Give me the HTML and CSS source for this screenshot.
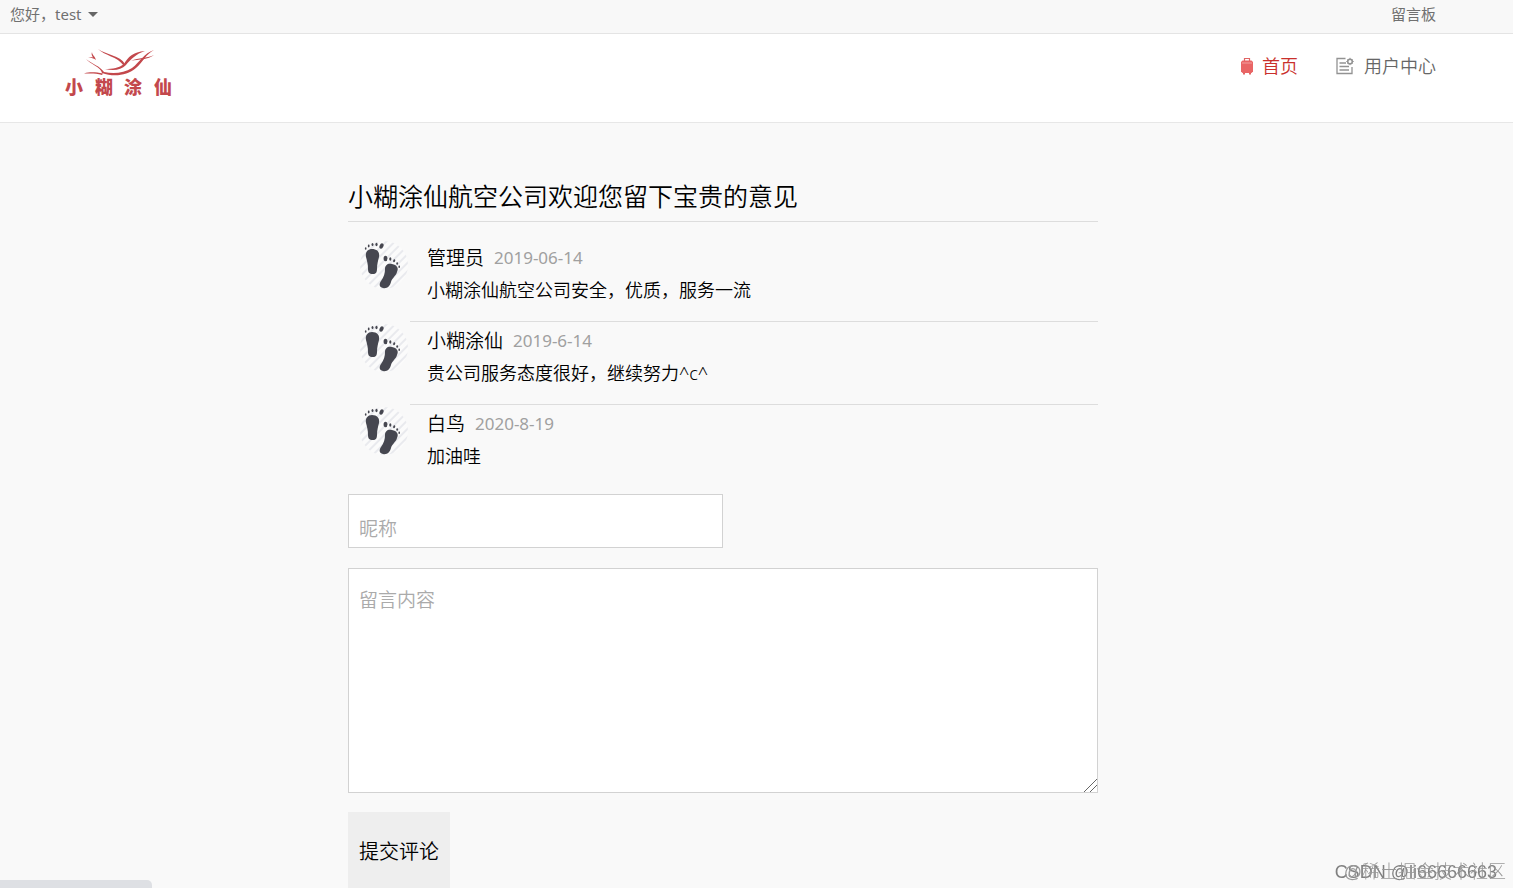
FILE: index.html
```html
<!DOCTYPE html>
<html lang="zh-CN">
<head>
<meta charset="utf-8">
<title>留言板</title>
<link rel="stylesheet" href="styles.css">
</head>
<body>
<svg class="defs" width="0" height="0" aria-hidden="true">
  <defs>
    <pattern id="stripes" width="6" height="6" patternUnits="userSpaceOnUse" patternTransform="rotate(45)">
      <rect width="6" height="6" fill="#fbfbfb"/>
      <rect width="2" height="6" fill="#e9eaee"/>
    </pattern>
    <symbol id="feet" viewBox="0 0 48 48">
      <circle cx="24" cy="24" r="24" fill="url(#stripes)"/>
      <g fill="#464750">
        <path d="M6 16C5 11 8 8 12 8c5 0 8 3 7 8-1 4-2 7-2 12 0 3-1 5-4 5-4 0-5-2-5-5 0-5-1-8-2-12z"/>
        <ellipse cx="21.500" cy="5" rx="1.900" ry="2.800" transform="rotate(25 21.500 5)"/>
        <ellipse cx="16.500" cy="3.500" rx="1.100" ry="1.800"/>
        <ellipse cx="12.500" cy="3.500" rx="1" ry="1.600"/>
        <ellipse cx="8.700" cy="5" rx=".9" ry="1.400"/>
        <ellipse cx="5.700" cy="7.500" rx=".8" ry="1.200"/>
        <path d="M25 28c0-4 3-6 7-5 5 1 7 4 5 8-1 4-5 6-6 10-1 4-4 7-8 6s-4-4-2-7c3-4 4-8 4-12z"/>
        <ellipse cx="25.500" cy="17.500" rx="1.900" ry="2.800"/>
        <ellipse cx="30.300" cy="18" rx="1.100" ry="1.800"/>
        <ellipse cx="34.200" cy="19.700" rx="1" ry="1.600" transform="rotate(20 34.200 19.700)"/>
        <ellipse cx="37.200" cy="22.500" rx=".9" ry="1.300"/>
        <ellipse cx="39.200" cy="25.700" rx=".8" ry="1.200"/>
      </g>
    </symbol>
  </defs>
</svg>

<div class="topbar">
  <button class="user" type="button">您好，test <span class="caret"></span></button>
  <a class="board" href="#">留言板</a>
</div>

<header class="header">
  <a class="logo" href="#" aria-label="小糊涂仙">
    <svg width="112" height="52" viewBox="0 0 112 52">
      <g fill="#c3484c">
        <path d="M35 2c8 6 22 6 27 15l-1 2C54 9 42 9 35 2z"/>
        <path d="M61 17c4-7 9-12 21-13-9 3-14 8-19 14-5 5-12 6-21 4 8 0 14-1 19-5z"/>
        <path d="M91 3c-8 4-11 12-18 18-9 8-23 9-34 5-1-6-12-9-16-14 6 5 14 7 18 13 10 2 20 1 28-4 8-6 12-15 22-18z"/>
        <path d="M68 14c8-4 15-2 23-6-6 5-15 4-23 6z"/>
        <path d="M21 26.500c7-2 12-1 19 0l-1 1.500c-6-2-11-1.500-18-1.500z"/>
        <path d="M29 5c0 3 3 4 4 8-3-2-4-2-8-3 3 0 4 0 5 .5-1-2-2-3-1-5.500z"/>
      </g>
      <text class="logo-text" x="2 32 61 91" y="47">小糊涂仙</text>
    </svg>
  </a>
  <nav class="nav">
    <a class="nav-link active" href="#">
      <svg width="14" height="18" viewBox="0 0 14 18"><path d="M4.500 4V1.500h5V4" fill="none" stroke="#e06464" stroke-width="1.200"/><path d="M2.500 3.500h9L13 5v9.500L11.500 16h-9L1 14.500V5z" fill="#e96565"/><path d="M2 6h10" stroke="#f3a0a0"/><path d="M3 16h2v1.500H3zM9 16h2v1.500H9z" fill="#e06464"/></svg>
      <span>首页</span>
    </a>
    <a class="nav-link center" href="#">
      <svg width="18" height="18" viewBox="0 0 18 18" fill="none" stroke="#929292" stroke-width="1.300"><path d="M9.500 1.500H1v15h15V10M3.500 6H10M3.500 9.500H13M3.500 13H13"/><circle cx="14" cy="4.500" r="2.300" stroke-width="1.600"/><path d="M14 .8v1.400M14 6.800v1.400M10.300 4.500h1.400M16.300 4.500h1.400M11.500 2l1 1M15.500 6l1 1M16.500 2l-1 1M12.500 6l-1 1" stroke-width="1"/></svg>
      <span>用户中心</span>
    </a>
  </nav>
</header>

<main class="content">
  <h1 class="title">小糊涂仙航空公司欢迎您留下宝贵的意见</h1>
  <ul class="comments">
    <li class="comment">
      <svg class="avatar"><use href="#feet"/></svg>
      <div class="body">
        <div class="meta"><span class="name">管理员</span><time class="date">2019-06-14</time></div>
        <p class="text">小糊涂仙航空公司安全，优质，服务一流</p>
      </div>
    </li>
    <li class="comment">
      <svg class="avatar"><use href="#feet"/></svg>
      <div class="body">
        <div class="meta"><span class="name">小糊涂仙</span><time class="date">2019-6-14</time></div>
        <p class="text">贵公司服务态度很好，继续努力^c^</p>
      </div>
    </li>
    <li class="comment">
      <svg class="avatar"><use href="#feet"/></svg>
      <div class="body">
        <div class="meta"><span class="name">白鸟</span><time class="date">2020-8-19</time></div>
        <p class="text">加油哇</p>
      </div>
    </li>
  </ul>
  <form class="form">
    <input class="field nickname" type="text" placeholder="昵称" aria-label="昵称">
    <textarea class="field message" placeholder="留言内容" aria-label="留言内容"></textarea>
    <button class="submit" type="button">提交评论</button>
  </form>
</main>

<div class="status"></div>
<div class="mark mark-csdn">CSDN @li66666663</div>
<div class="mark mark-juejin">@稀土掘金技术社区</div>
</body>
</html>
```
FILE: styles.css
```css
* {
  box-sizing: border-box;
}

body {
  margin: 0;
  background: #f9f9f9;
  color: #000;
  font-family: "Noto Sans", "Noto Sans CJK SC", sans-serif;
  font-weight: 350;
}

a {
  color: inherit;
  text-decoration: none;
}

button,
input,
textarea {
  font: inherit;
}

.defs {
  position: absolute;
}

.topbar {
  display: flex;
  justify-content: space-between;
  align-items: center;
  height: 34px;
  padding: 0 77px 6px 10px;
  border-bottom: 1px solid #e4e4e4;
  background: #f8f8f8;
  color: #707070;
  font-size: 15px;
  font-weight: 400;
}

.user {
  display: flex;
  align-items: center;
  gap: 7px;
  padding: 0;
  border: 0;
  background: none;
  color: inherit;
}

.caret {
  margin-top: 2px;
  border: 5px solid transparent;
  border-top-color: #666;
  border-bottom: 0;
}

.header {
  display: flex;
  justify-content: space-between;
  align-items: flex-start;
  height: 89px;
  padding: 13px 77px 0 63px;
  border-bottom: 1px solid #e7e7e7;
  background: #fff;
}

.logo svg {
  display: block;
}

.logo-text {
  fill: #c3484c;
  font-family: "Noto Sans CJK SC", sans-serif;
  font-size: 18px;
  font-weight: 900;
}

.nav {
  display: flex;
  gap: 38px;
  padding-top: 6px;
  color: #666;
  font-size: 18px;
  line-height: 26px;
}

.nav-link {
  display: flex;
  align-items: center;
  gap: 8px;
}

.nav-link.center {
  gap: 10px;
}

.active {
  color: #c9302c;
}

.content {
  max-width: 750px;
  margin-left: 23%;
}

.title {
  margin: 0;
  padding: 54px 0 6px;
  border-bottom: 1px solid #ddd;
  font-size: 25px;
  font-weight: 350;
  line-height: 38px;
}

.comments {
  margin: 0;
  padding: 16px 0 0 12px;
  list-style: none;
}

.comment {
  display: flex;
  gap: 2px;
}

.avatar {
  width: 48px;
  height: 48px;
  margin-top: 3px;
}

.body {
  flex: 1;
  height: 83px;
  padding: 4px 0 0 17px;
  border-top: 1px solid #ddd;
}

.comment:first-child .body {
  border-top-color: transparent;
}

.meta {
  display: flex;
  align-items: center;
  gap: 10px;
  line-height: 30px;
}

.name {
  font-size: 19px;
}

.date {
  color: #a0a0a0;
  font-size: 17px;
  font-weight: 400;
}

.text {
  margin: 0;
  font-size: 18px;
  line-height: 34px;
}

.form {
  display: flex;
  flex-direction: column;
  align-items: flex-start;
  padding-top: 7px;
}

.field {
  border: 1px solid #d2d2d2;
  border-radius: 0;
  background: #fff;
  font-size: 19px;
  line-height: 28px;
  outline: 0;
}

.field::placeholder {
  color: #aaa;
}

.nickname {
  width: 50%;
  height: 54px;
  margin-bottom: 20px;
  padding: 16px 10px 0;
}

.message {
  width: 100%;
  height: 225px;
  margin-bottom: 19px;
  padding: 17px 10px;
}

.message::-webkit-resizer {
  background: linear-gradient(135deg, transparent 55%, #666 55%, #666 60%, transparent 60%, transparent 75%, #666 75%, #666 80%, transparent 80%);
}

.submit {
  height: 76px;
  padding: 0 11px;
  border: 0;
  background: #eee;
  color: #000;
  font-size: 20px;
}

.status {
  position: fixed;
  bottom: 0;
  left: 0;
  width: 152px;
  height: 8px;
  border-radius: 0 5px 0 0;
  background: #dee0e4;
}

.mark {
  position: fixed;
  bottom: 3px;
  color: #808080;
  font-family: "Liberation Sans", "Noto Sans CJK SC", sans-serif;
  font-size: 18px;
  font-weight: 300;
  line-height: 26px;
  white-space: nowrap;
}

.mark-csdn {
  right: 16px;
}

.mark-juejin {
  right: 7px;
  color: #999;
}
```
